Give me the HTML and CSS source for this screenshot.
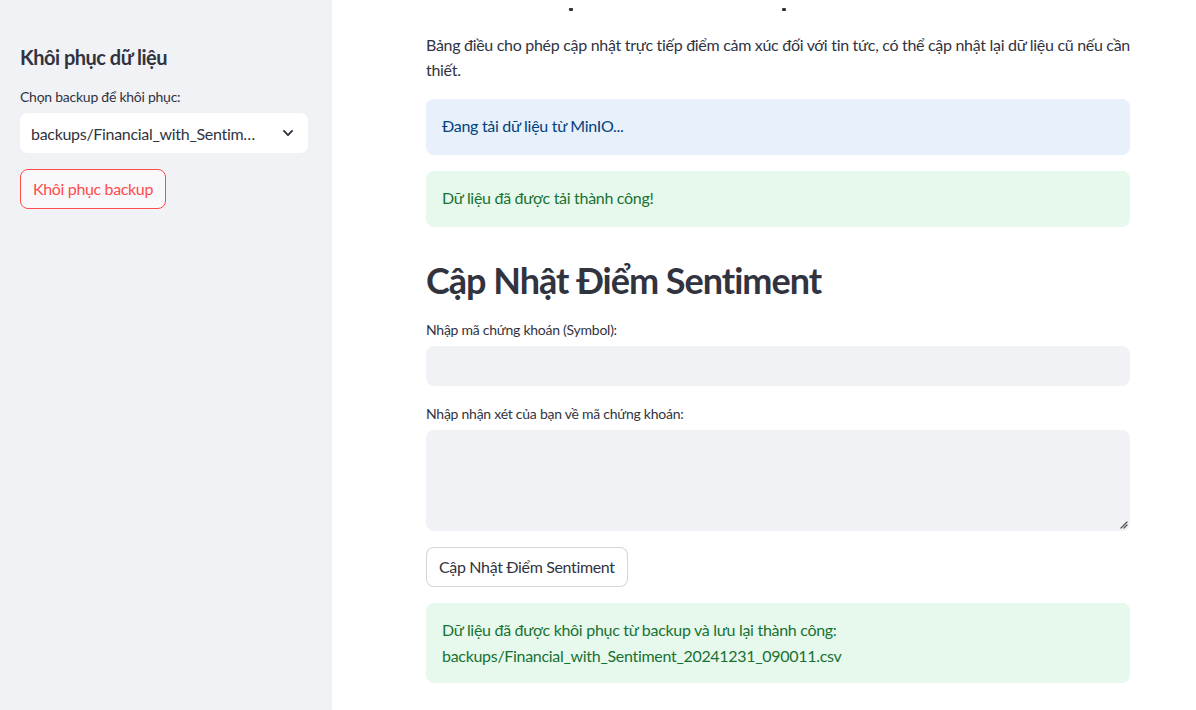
FILE: index.html
```html
<!DOCTYPE html>
<html lang="vi">
<head>
<meta charset="utf-8">
<title>Cập Nhật Điểm Sentiment</title>
<link rel="stylesheet" href="styles.css">
</head>
<body>
<aside class="sidebar">
  <h3 class="side-title">Khôi phục dữ liệu</h3>
  <label class="label">Chọn backup để khôi phục:</label>
  <div class="select">
    <span class="select-value">backups/Financial_with_Sentim…</span>
    <svg class="chev" width="14" height="14" viewBox="0 0 24 24"><path d="M5 8.5l7 7 7-7" fill="none" stroke="#31333f" stroke-width="3.2" stroke-linecap="round" stroke-linejoin="round"/></svg>
  </div>
  <button class="btn btn-danger">Khôi phục backup</button>
</aside>
<main class="main">
  <div class="content">
    <div class="title-tail"><span class="dot d1"></span><span class="dot d2"></span></div>
    <p class="desc">Bảng điều cho phép cập nhật trực tiếp điểm cảm xúc đối với tin tức, có thể cập nhật lại dữ liệu cũ nếu cần thiết.</p>
    <div class="alert info">Đang tải dữ liệu từ MinIO...</div>
    <div class="alert success">Dữ liệu đã được tải thành công!</div>
    <h2 class="heading">Cập Nhật Điểm Sentiment</h2>
    <label class="label">Nhập mã chứng khoán (Symbol):</label>
    <div class="input"></div>
    <label class="label label2">Nhập nhận xét của bạn về mã chứng khoán:</label>
    <div class="textarea">
      <svg class="grip" width="10" height="10" viewBox="0 0 10 10"><path d="M9 3L3 9M9 6L6 9" stroke="#555" stroke-width="1.3" stroke-linecap="round"/></svg>
    </div>
    <button class="btn btn-plain">Cập Nhật Điểm Sentiment</button>
    <div class="alert success two">Dữ liệu đã được khôi phục từ backup và lưu lại thành công:<br>backups/Financial_with_Sentiment_20241231_090011.csv</div>
  </div>
</main>
</body>
</html>
```
FILE: styles.css
```css
* { box-sizing: border-box; }
html, body { margin: 0; padding: 0; }
body {
  width: 1196px;
  height: 710px;
  overflow: hidden;
  display: flex;
  font-family: Lato, "Noto Sans", sans-serif;
  color: #31333f;
  background: #ffffff;
  letter-spacing: -0.3px;
}
.sidebar {
  width: 332px;
  flex: none;
  background: #f0f2f6;
  padding: 44px 24px 0 20px;
  display: flex;
  flex-direction: column;
  align-items: flex-start;
}
.side-title {
  margin: 0;
  font-size: 20px;
  font-weight: 700;
  line-height: 26px;
  letter-spacing: -0.5px;
}
.label {
  display: block;
  font-size: 14px;
  line-height: 20px;
  margin: 0;
  letter-spacing: -0.25px;
}
.sidebar .label { margin-top: 17px; }
.select {
  margin-top: 6px;
  width: 288px;
  height: 40px;
  background: #ffffff;
  border-radius: 8px;
  display: flex;
  align-items: center;
  justify-content: space-between;
  padding: 0 13px 0 11px;
  font-size: 16px;
}
.chev { display: block; }
.btn {
  font-family: inherit;
  font-size: 16px;
  letter-spacing: -0.35px;
  height: 40px;
  border-radius: 8px;
  padding: 0 12px 2px;
  cursor: pointer;
}
.btn-danger {
  margin-top: 16px;
  background: #f9f9fb;
  color: #ff4b4b;
  border: 1px solid #ff4b4b;
}
.main {
  flex: 1;
  padding-left: 94px;
}
.content {
  width: 704px;
}
.title-tail {
  height: 12px;
  position: relative;
}
.dot {
  position: absolute;
  top: 8px;
  width: 4px;
  height: 3px;
  background: #31333f;
  border-radius: 1px;
}
.d1 { left: 143px; }
.d2 { left: 356px; }
.desc {
  margin: 20px 0 0;
  font-size: 16px;
  line-height: 25px;
}
.alert {
  border-radius: 8px;
  padding: 15px 16px 17px;
  font-size: 16px;
  line-height: 24px;
}
.info {
  margin-top: 17px;
  background: #e7f0fb;
  color: #004280;
}
.success {
  margin-top: 16px;
  background: #e7f8ed;
  color: #177233;
}
.success.two { line-height: 26px; padding: 14px 16px; }
.heading {
  margin: 30px 0 0;
  font-size: 36px;
  font-weight: 700;
  line-height: 46px;
  letter-spacing: -1px;
}
.content .label { margin-top: 17px; }
.content .label2 { margin-top: 18px; }
.input {
  margin-top: 6px;
  height: 40px;
  background: #f0f2f6;
  border-radius: 8px;
}
.textarea {
  margin-top: 6px;
  height: 101px;
  background: #f0f2f6;
  border-radius: 8px;
  display: flex;
  align-items: flex-end;
  justify-content: flex-end;
  padding: 0 2px 2px 0;
}
.grip { display: block; }
.btn-plain {
  margin-top: 16px;
  background: #ffffff;
  color: #31333f;
  border: 1px solid rgba(49, 51, 63, 0.2);
}
```
